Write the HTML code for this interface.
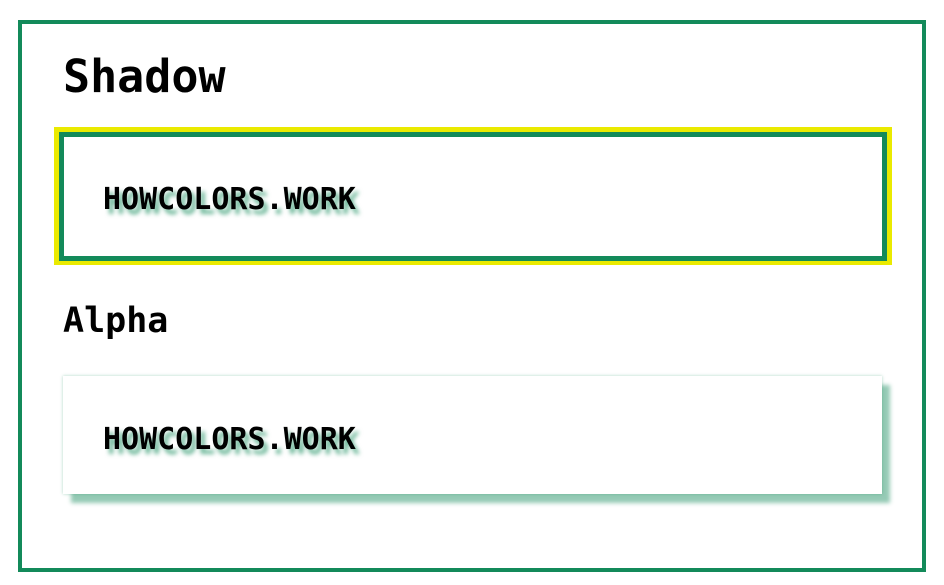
<!DOCTYPE html>
<html><head><meta charset="utf-8"><style>
body{margin:0;width:944px;height:585px;background:#fff;position:relative;overflow:hidden;font-family:"DejaVu Sans Mono","Liberation Mono",monospace;}
.outer{position:absolute;left:18px;top:20px;width:900px;height:544px;border:4px solid #138a5a;}
.h1{position:absolute;left:63px;top:50px;font-size:45px;font-weight:bold;line-height:54px;margin:0;color:#000;}
.h2{position:absolute;left:63px;top:300px;font-size:35px;font-weight:bold;line-height:42px;color:#000;}
.b1w{position:absolute;left:54px;top:127px;width:838px;height:138px;background:#eaea00;}
.b1i{position:absolute;left:59px;top:132px;width:818px;height:119px;border:5px solid #138a5a;background:#fff;}
.b2{position:absolute;left:63px;top:376px;width:819px;height:118px;background:#fff;box-shadow:0 0 3px rgba(19,138,90,0.35),8px 9px 4px rgba(19,138,90,0.45);}
.t{position:absolute;left:103px;font-size:30px;font-weight:bold;line-height:36px;color:#000;text-shadow:4px 5px 4px rgba(19,138,90,0.6);}
</style></head><body>
<div class="outer"></div>
<div class="h1">Shadow</div>
<div class="b1w"></div><div class="b1i"></div>
<div class="t" style="top:182px">HOWCOLORS.WORK</div>
<div class="h2">Alpha</div>
<div class="b2"></div>
<div class="t" style="top:422px">HOWCOLORS.WORK</div>
</body></html>
